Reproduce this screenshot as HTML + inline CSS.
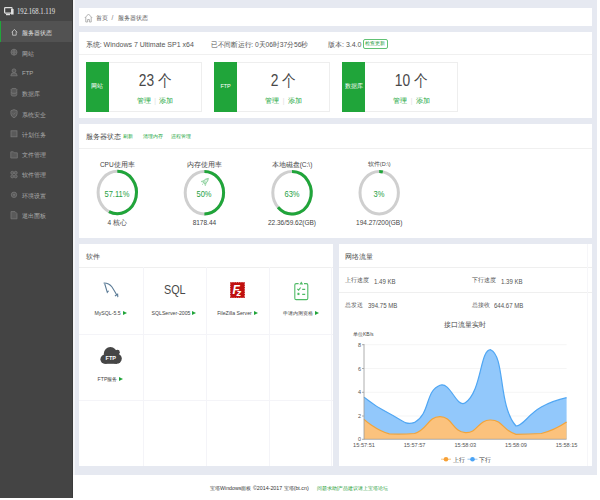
<!DOCTYPE html>
<html><head><meta charset="utf-8">
<style>
*{margin:0;padding:0;box-sizing:border-box}
html,body{width:600px;height:500px;overflow:hidden;background:#fff;font-family:"Liberation Sans",sans-serif;color:#555}
.a{position:absolute;white-space:nowrap;line-height:1}
#side{position:absolute;left:0;top:0;width:73px;height:498px;background:#444}
#main{position:absolute;left:73px;top:0;width:524px;height:475px;background:#e6e9f1}
.card{position:absolute;background:#fff}
.nav{position:absolute;left:22px;font-size:6px;color:#adadad}
.ni{position:absolute;left:10px;width:7px;height:7px}
.g{color:#20a53a}
.stat{position:absolute;top:62px;width:116px;height:50px;border:1px solid #eee;background:#fff}
.stat .lab{position:absolute;left:-1px;top:-1px;width:23.2px;height:50px;background:#20a53a;color:#fff;font-size:5.5px;text-align:center;line-height:49px}
.stat .num{position:absolute;left:23px;right:0;top:10px;text-align:center;font-size:14.5px;color:#484848;line-height:1;transform:scale(0.95,1.12);transform-origin:50% 0}
.stat .ops{position:absolute;left:23px;right:0;top:34.5px;text-align:center;font-size:6.5px;color:#20a53a;line-height:1}
.ct{position:absolute;font-size:6.5px;color:#444;text-align:center;width:80px}
.pct{position:absolute;font-size:9.2px;color:#27a043;text-align:center;width:60px;transform:scaleX(0.82);transform-origin:50% 0}
.lbl{position:absolute;font-size:5.2px;color:#444;text-align:center;width:63px}
.tri{display:inline-block;width:0;height:0;border-left:4px solid #20a53a;border-top:2.5px solid transparent;border-bottom:2.5px solid transparent;margin-left:2px;vertical-align:-0.5px}
.hl{position:absolute;height:1px;background:#f2f2f2}
.vl{position:absolute;width:1px;background:#f4f4f8}
</style></head><body>
<div id="side">
  <div style="position:absolute;left:0;top:0;width:73px;height:21px;background:#454545"></div>
  <svg class="a" style="left:4px;top:7px" width="10" height="9" viewBox="0 0 10 9"><rect x="0.6" y="0.6" width="7.5" height="5.5" rx="0.8" fill="none" stroke="#e0e0e0" stroke-width="1.2"/><rect x="7" y="2" width="2.6" height="5.5" fill="#e0e0e0"/><rect x="2" y="7" width="4" height="1.2" fill="#e0e0e0"/></svg>
  <div class="a" style="left:16.5px;top:7.5px;font-size:7.5px;color:#e4e4e4;font-family:'Liberation Serif',serif;transform:scaleX(0.89);transform-origin:0 0">192.168.1.119</div>
  <div style="position:absolute;left:0;top:20.5px;width:73px;height:21px;background:#525252"></div>
  <div style="position:absolute;left:0;top:20.5px;width:1.2px;height:21px;background:#20a53a"></div>
  <svg class="a" style="left:11px;top:28px" width="8" height="8" viewBox="0 0 8 8"><path d="M0.7,4.3 L3.4,1.4 L6.1,4.3 M1.6,3.5 V7.2 H5.2 V3.5" fill="none" stroke="#d0d0d0" stroke-width="0.8"/></svg>
  <div class="nav" style="left:22px;top:29px;color:#e6e6e6">服务器状态</div>
  <div class="nav" style="top:49.5px">网站</div>
  <div class="nav" style="top:69.5px">FTP</div>
  <div class="nav" style="top:90px">数据库</div>
  <div class="nav" style="top:110.5px">系统安全</div>
  <div class="nav" style="top:130.5px">计划任务</div>
  <div class="nav" style="top:151px">文件管理</div>
  <div class="nav" style="top:170.5px">软件管理</div>
  <div class="nav" style="top:191.5px">环境设置</div>
  <div class="nav" style="top:211.5px">退出面板</div>
  <svg class="a" style="left:0;top:0" width="73" height="230">
    <g fill="#5a5a5a" stroke="#777" stroke-width="0.8">
      <circle cx="14" cy="52.2" r="3"/><path d="M11,52.2 h6 M14,49.2 q-1.8,3 0,6 q1.8,-3 0,-6" fill="none" stroke-width="0.6"/>
      <circle cx="14" cy="70.8" r="1.9"/><path d="M10.8,75.8 q0,-3 3.2,-3 q3.2,0 3.2,3 z"/>
      <ellipse cx="14" cy="89.5" rx="2.8" ry="1.1"/><path d="M11.2,89.5 v5.5 q0,1.1 2.8,1.1 q2.8,0 2.8,-1.1 v-5.5 M11.2,92.3 q0,1.1 2.8,1.1 q2.8,0 2.8,-1.1"/>
      <path d="M14,109.6 l3.1,1.2 v3 q0,2.7 -3.1,4 q-3.1,-1.3 -3.1,-4 v-3 z"/><path d="M12.6,113.4 l1,1 l1.8,-1.9" fill="none" stroke-width="0.6"/>
      <rect x="11" y="130.8" width="6" height="6"/>
      <path d="M10.8,151.8 h2.6 l0.9,1 h3 v5.2 h-6.5 z"/>
      <circle cx="12.3" cy="172.8" r="1.5"/><circle cx="15.7" cy="172.8" r="1.5"/><circle cx="12.3" cy="176.4" r="1.5"/><circle cx="15.7" cy="176.4" r="1.5"/>
      <circle cx="14" cy="194.8" r="2.7"/><circle cx="14" cy="194.8" r="0.9" fill="#777" stroke="none"/>
      <path d="M11,211.6 h4 l2,2 v5.2 h-6 z"/>
    </g>
  </svg>
  <div style="position:absolute;right:0;top:0;width:1px;height:498px;background:#3a3a3a"></div>
</div>
<div id="main"></div>
<div style="position:absolute;left:73px;top:0;width:1.5px;height:475px;background:#f3f4f7"></div>

<!-- breadcrumb -->
<div class="card" style="left:79px;top:8px;width:513px;height:18px"></div>
<svg class="a" style="left:84px;top:12.5px" width="9" height="10" viewBox="0 0 9 10"><path d="M0.8,5 L4.5,1 L8.2,5 M1.8,4.2 V9 H3.6 V6.5 H5.4 V9 H7.2 V4.2" fill="none" stroke="#aaa" stroke-width="0.9"/></svg>
<div class="a" style="left:95.5px;top:15.8px;font-size:5.8px;color:#505050">首页</div>
<div class="a" style="left:111.5px;top:14.6px;font-size:6.5px;color:#777">/</div>
<div class="a" style="left:117.5px;top:15.8px;font-size:5.8px;color:#505050">服务器状态</div>

<!-- system card -->
<div class="card" style="left:79px;top:32px;width:513px;height:86px"></div>
<div class="hl" style="left:79px;top:54px;width:513px;background:#f0f0f0"></div>
<div class="a" style="left:85.7px;top:40.5px;font-size:7px;color:#555">系统: Windows 7 Ultimate SP1 x64</div>
<div class="a" style="left:211px;top:40.5px;font-size:7px;color:#555;transform:scaleX(0.96);transform-origin:0 0">已不间断运行: 0天06时37分56秒</div>
<div class="a" style="left:328px;top:40.5px;font-size:7px;color:#555">版本: 3.4.0</div>
<div class="a" style="left:362.5px;top:39px;width:25px;height:9.6px;border:1px solid #62c275;border-radius:2px;font-size:4.6px;color:#2a9e45;text-align:center;line-height:7.6px">检查更新</div>

<div class="stat" style="left:85.5px"><div class="lab">网站</div><div class="num">23 个</div><div class="ops">管理 &nbsp;<span style="color:#ddd">|</span>&nbsp; 添加</div></div>
<div class="stat" style="left:214px"><div class="lab">FTP</div><div class="num">2 个</div><div class="ops">管理 &nbsp;<span style="color:#ddd">|</span>&nbsp; 添加</div></div>
<div class="stat" style="left:342px"><div class="lab">数据库</div><div class="num">10 个</div><div class="ops">管理 &nbsp;<span style="color:#ddd">|</span>&nbsp; 添加</div></div>

<!-- server status -->
<div class="card" style="left:79px;top:124px;width:513px;height:114px"></div>
<div class="hl" style="left:79px;top:148px;width:513px;background:#f0f0f0"></div>
<div class="a" style="left:85.7px;top:134px;font-size:6.5px;color:#4a4a4a">服务器状态</div>
<div class="a g" style="left:123px;top:135px;font-size:4.7px">刷新</div>
<div class="a g" style="left:142.5px;top:135px;font-size:4.5px">清理内存</div>
<div class="a g" style="left:171px;top:135px;font-size:4.6px">进程管理</div>

<svg class="a" style="left:0;top:0" width="600" height="240">
  <g fill="none" stroke-width="3">
    <ellipse cx="117.3" cy="192.5" rx="19.2" ry="21.2" stroke="#cfcfcf"/>
    <ellipse cx="204.4" cy="192.8" rx="19.2" ry="21.2" stroke="#cfcfcf"/>
    <ellipse cx="292" cy="192.8" rx="19.2" ry="21.2" stroke="#cfcfcf"/>
    <ellipse cx="379.2" cy="192.8" rx="19.2" ry="21.2" stroke="#cfcfcf"/>
  </g>
  <path d="M117.30,171.30 A19.20,21.20 0 1 1 109.01,211.62" fill="none" stroke="#20a53a" stroke-width="3"/><path d="M204.40,171.60 A19.20,21.20 0 0 1 204.40,214.00" fill="none" stroke="#20a53a" stroke-width="3"/><path d="M292.00,171.60 A19.20,21.20 0 1 1 278.00,207.31" fill="none" stroke="#20a53a" stroke-width="3"/><path d="M379.20,171.60 A19.20,21.20 0 0 1 382.80,171.98" fill="none" stroke="#20a53a" stroke-width="3"/>
</svg>
<div class="ct" style="left:77.3px;top:161px">CPU使用率</div>
<div class="pct" style="left:87.3px;top:188.5px">57.11%</div>
<div class="ct" style="left:77.3px;top:219px">4 核心</div>
<div class="ct" style="left:164.4px;top:161px">内存使用率</div>
<svg class="a" style="left:0;top:0" width="215" height="190"><g transform="translate(205.2,181.6) rotate(45)"><path d="M0,-4.6 Q2,-2.6 1.8,1.8 L-1.8,1.8 Q-2,-2.6 0,-4.6 Z" fill="#bfe5c8" stroke="#7cc98f" stroke-width="0.7"/><path d="M-1.8,0.6 L-3,2.8 L-1.6,2.4 M1.8,0.6 L3,2.8 L1.6,2.4" fill="none" stroke="#7cc98f" stroke-width="0.6"/><path d="M0,2.4 V4.4" stroke="#7cc98f" stroke-width="0.7"/><circle cx="0" cy="-1.2" r="0.7" fill="#fff"/></g></svg>
<div class="pct" style="left:174.4px;top:188.5px">50%</div>
<div class="ct" style="left:164.4px;top:219px">8178.44</div>
<div class="ct" style="left:252px;top:161px">本地磁盘(C:\)</div>
<div class="pct" style="left:262px;top:188.5px">63%</div>
<div class="ct" style="left:252px;top:219px">22.36/59.62(GB)</div>
<div class="ct" style="left:339.2px;top:161px;font-size:5.5px">软件(D:\)</div>
<div class="pct" style="left:349.2px;top:188.5px">3%</div>
<div class="ct" style="left:339.2px;top:219px">194.27/200(GB)</div>

<!-- software card -->
<div class="card" style="left:79px;top:244px;width:253.5px;height:222px"></div>
<div class="a" style="left:85.5px;top:253.7px;font-size:6.6px;color:#4a4a4a">软件</div>
<div class="hl" style="left:79px;top:267px;width:253.5px;background:#efefef"></div>
<div class="hl" style="left:79px;top:333.5px;width:253.5px;background:#f4f4f8"></div>
<div class="hl" style="left:79px;top:399.5px;width:253.5px;background:#f4f4f8"></div>
<div class="vl" style="left:142.5px;top:267px;height:199px"></div>
<div class="vl" style="left:206px;top:267px;height:199px"></div>
<div class="vl" style="left:269px;top:267px;height:199px"></div>
<div class="vl" style="left:331px;top:267px;height:199px"></div>

<svg class="a" style="left:0;top:0" width="130" height="305"><g fill="none" stroke="#5b7b96" stroke-width="1.1" stroke-linecap="round"><path d="M104,283 Q109,283 112,287 Q114.5,291 116.5,294.5"/><path d="M104.8,284 Q106,288 107.3,292.3 L108.3,291.2"/><path d="M115.3,295.8 L117.6,294.2 L117.8,296.6"/></g></svg>
<div class="lbl" style="left:79px;top:309.5px">MySQL-5.5<span class="tri"></span></div>
<div class="a" style="left:143px;top:283.5px;width:63.5px;text-align:center;font-size:10.8px;color:#4a4a4a;transform:scaleY(1.1);transform-origin:50% 0">SQL</div>
<div class="lbl" style="left:142.5px;top:309.5px">SQLServer-2005<span class="tri"></span></div>
<svg class="a" style="left:230px;top:281.7px" width="15" height="16" viewBox="0 0 15 16"><rect x="0" y="0" width="15" height="16" fill="#c0100f"/><circle cx="1.20" cy="0.1" r="0.5" fill="#fff"/><circle cx="1.20" cy="15.9" r="0.5" fill="#fff"/><circle cx="3.00" cy="0.1" r="0.5" fill="#fff"/><circle cx="3.00" cy="15.9" r="0.5" fill="#fff"/><circle cx="4.80" cy="0.1" r="0.5" fill="#fff"/><circle cx="4.80" cy="15.9" r="0.5" fill="#fff"/><circle cx="6.60" cy="0.1" r="0.5" fill="#fff"/><circle cx="6.60" cy="15.9" r="0.5" fill="#fff"/><circle cx="8.40" cy="0.1" r="0.5" fill="#fff"/><circle cx="8.40" cy="15.9" r="0.5" fill="#fff"/><circle cx="10.20" cy="0.1" r="0.5" fill="#fff"/><circle cx="10.20" cy="15.9" r="0.5" fill="#fff"/><circle cx="12.00" cy="0.1" r="0.5" fill="#fff"/><circle cx="12.00" cy="15.9" r="0.5" fill="#fff"/><circle cx="13.80" cy="0.1" r="0.5" fill="#fff"/><circle cx="13.80" cy="15.9" r="0.5" fill="#fff"/><circle cx="0.1" cy="1.10" r="0.5" fill="#fff"/><circle cx="14.9" cy="1.10" r="0.5" fill="#fff"/><circle cx="0.1" cy="2.82" r="0.5" fill="#fff"/><circle cx="14.9" cy="2.82" r="0.5" fill="#fff"/><circle cx="0.1" cy="4.54" r="0.5" fill="#fff"/><circle cx="14.9" cy="4.54" r="0.5" fill="#fff"/><circle cx="0.1" cy="6.26" r="0.5" fill="#fff"/><circle cx="14.9" cy="6.26" r="0.5" fill="#fff"/><circle cx="0.1" cy="7.98" r="0.5" fill="#fff"/><circle cx="14.9" cy="7.98" r="0.5" fill="#fff"/><circle cx="0.1" cy="9.70" r="0.5" fill="#fff"/><circle cx="14.9" cy="9.70" r="0.5" fill="#fff"/><circle cx="0.1" cy="11.42" r="0.5" fill="#fff"/><circle cx="14.9" cy="11.42" r="0.5" fill="#fff"/><circle cx="0.1" cy="13.14" r="0.5" fill="#fff"/><circle cx="14.9" cy="13.14" r="0.5" fill="#fff"/><circle cx="0.1" cy="14.86" r="0.5" fill="#fff"/><circle cx="14.9" cy="14.86" r="0.5" fill="#fff"/><text x="2.6" y="11.6" font-family="Liberation Sans" font-weight="bold" font-style="italic" font-size="12" fill="#fff">F</text><text x="6.6" y="13.7" font-family="Liberation Sans" font-weight="bold" font-style="italic" font-size="9.5" fill="#fff">z</text></svg>
<div class="lbl" style="left:206px;top:309.5px">FileZilla Server<span class="tri"></span></div>
<svg class="a" style="left:0;top:0" width="320" height="305"><g fill="none" stroke="#4fba66" stroke-width="1.1"><path d="M298.6,283.6 H296.2 Q294.8,283.6 294.8,285 V298.2 Q294.8,299.6 296.2,299.6 H306.4 Q307.8,299.6 307.8,298.2 V285 Q307.8,283.6 306.4,283.6 H304"/><path d="M297.4,288.9 L298.6,290.2 L300.6,287.5 M302.2,289.4 H305.2 M297.6,293 L299.3,294.8 M299.3,293 L297.6,294.8 M302.2,294.4 H305.2"/></g><path d="M299.4,284.6 L301.3,281.6 L303.2,284.6 Z" fill="#4fba66"/></svg>
<div class="lbl" style="left:269px;top:309.5px">申请内测资格<span class="tri"></span></div>
<svg class="a" style="left:0;top:0" width="130" height="370"><g fill="#464646"><rect x="104.5" y="355" width="12.5" height="8.8"/><circle cx="105" cy="359.2" r="4.6"/><circle cx="116.6" cy="358.6" r="5.2"/><circle cx="110.4" cy="353.6" r="6.6"/><circle cx="117.4" cy="352.2" r="2.4"/></g><text x="110.8" y="360.2" font-family="Liberation Sans" font-weight="bold" font-size="5.6" fill="#fff" text-anchor="middle">FTP</text></svg>
<div class="lbl" style="left:79px;top:375.5px">FTP服务<span class="tri"></span></div>

<!-- network card -->
<div class="card" style="left:338.5px;top:244px;width:253.5px;height:222px"></div>
<div class="a" style="left:344.5px;top:254px;font-size:6.6px;color:#4a4a4a">网络流量</div>
<div class="hl" style="left:338.5px;top:267px;width:253.5px;background:#efefef"></div>
<div class="hl" style="left:338.5px;top:292px;width:253.5px;background:#efefef"></div>
<div class="vl" style="left:587px;top:244px;height:222px;background:#f6f6f9"></div>
<div class="a" style="left:344.5px;top:278px;font-size:5.5px;color:#555">上行速度</div>
<div class="a" style="left:373.5px;top:278.6px;font-size:6.6px;color:#555;transform:scaleX(0.92);transform-origin:0 0">1.49 KB</div>
<div class="a" style="left:471.5px;top:278px;font-size:5.5px;color:#555">下行速度</div>
<div class="a" style="left:500.5px;top:278.6px;font-size:6.6px;color:#555;transform:scaleX(0.92);transform-origin:0 0">1.39 KB</div>
<div class="a" style="left:344.5px;top:303px;font-size:5.5px;color:#555">总发送</div>
<div class="a" style="left:367.8px;top:303.4px;font-size:6.6px;color:#555;transform:scaleX(0.92);transform-origin:0 0">394.75 MB</div>
<div class="a" style="left:471.5px;top:303px;font-size:5.5px;color:#555">总接收</div>
<div class="a" style="left:493.5px;top:303.4px;font-size:6.6px;color:#555;transform:scaleX(0.92);transform-origin:0 0">644.67 MB</div>
<div class="a" style="left:444px;top:320.5px;font-size:7px;color:#444">接口流量实时</div>
<div class="a" style="left:353px;top:332px;font-size:5px;color:#444">单位KB/s</div>
<svg class="a" style="left:0;top:0" width="600" height="470">
  <g stroke="#f2f2f2" stroke-width="0.8">
    <line x1="364" y1="344.7" x2="566.6" y2="344.7"/>
    <line x1="364" y1="368.5" x2="566.6" y2="368.5"/>
    <line x1="364" y1="392.3" x2="566.6" y2="392.3"/>
    <line x1="364" y1="416" x2="566.6" y2="416"/>
  </g>
  <path d="M364.0,397.1 C364.0,397.1 375.9,406.8 389.3,413.5 C401.2,419.5 405.2,426.0 414.6,422.4 C430.5,413.5 424.9,391.0 440.0,385.2 C450.3,381.2 456.6,408.8 465.3,402.7 C481.9,391.0 479.9,349.7 490.6,349.7 C505.3,356.4 497.8,405.4 516.0,426.0 C523.1,426.0 527.6,414.8 541.3,407.1 C553.0,400.6 566.6,397.7 566.6,397.7 L566.6,439.0 L364.0,439.0 Z" fill="#92c8fb"/>
  <path d="M364.0,397.1 C364.0,397.1 375.9,406.8 389.3,413.5 C401.2,419.5 405.2,426.0 414.6,422.4 C430.5,413.5 424.9,391.0 440.0,385.2 C450.3,381.2 456.6,408.8 465.3,402.7 C481.9,391.0 479.9,349.7 490.6,349.7 C505.3,356.4 497.8,405.4 516.0,426.0 C523.1,426.0 527.6,414.8 541.3,407.1 C553.0,400.6 566.6,397.7 566.6,397.7" fill="none" stroke="#4fa6f3" stroke-width="1.2"/>
  <path d="M364.0,419.4 C364.0,419.4 375.8,430.2 389.3,433.9 C401.1,434.3 403.1,434.3 414.6,433.5 C428.5,428.8 427.2,416.9 440.0,416.7 C452.5,416.7 452.3,431.8 465.3,432.6 C477.6,433.4 478.1,419.6 490.6,420.0 C503.5,420.4 502.4,430.7 516.0,434.3 C527.7,434.3 529.2,434.3 541.3,433.5 C554.5,430.2 566.6,422.0 566.6,422.0 L566.6,439.0 L364.0,439.0 Z" fill="#fbc27d"/>
  <path d="M364.0,419.4 C364.0,419.4 375.8,430.2 389.3,433.9 C401.1,434.3 403.1,434.3 414.6,433.5 C428.5,428.8 427.2,416.9 440.0,416.7 C452.5,416.7 452.3,431.8 465.3,432.6 C477.6,433.4 478.1,419.6 490.6,420.0 C503.5,420.4 502.4,430.7 516.0,434.3 C527.7,434.3 529.2,434.3 541.3,433.5 C554.5,430.2 566.6,422.0 566.6,422.0" fill="none" stroke="#f2a43a" stroke-width="1.2"/>
  <line x1="364" y1="344" x2="364" y2="439.5" stroke="#999" stroke-width="0.8"/>
  <line x1="364" y1="439.3" x2="566.6" y2="439.3" stroke="#999" stroke-width="0.8"/>
  <g stroke="#999" stroke-width="0.8">
    <line x1="362" y1="344.7" x2="364" y2="344.7"/><line x1="362" y1="368.5" x2="364" y2="368.5"/>
    <line x1="362" y1="392.3" x2="364" y2="392.3"/><line x1="362" y1="416" x2="364" y2="416"/><line x1="362" y1="439.3" x2="364" y2="439.3"/>
  </g>
  <g font-family="Liberation Sans" font-size="5.5" fill="#555" text-anchor="end">
    <text x="361" y="346.7">8</text><text x="361" y="370.5">6</text><text x="361" y="394.3">4</text><text x="361" y="418">2</text><text x="361" y="441.3">0</text>
  </g>
  <g font-family="Liberation Sans" font-size="5.6" fill="#555" text-anchor="middle">
    <text x="364" y="447.2">15:57:51</text><text x="414.6" y="447.2">15:57:57</text><text x="465.3" y="447.2">15:58:03</text><text x="516" y="447.2">15:58:09</text><text x="566.6" y="447.2">15:58:15</text>
  </g>
  <line x1="441" y1="459.2" x2="451" y2="459.2" stroke="#f7b55e" stroke-width="0.8"/>
  <circle cx="446" cy="459.2" r="2.3" fill="#f7a035"/>
  <line x1="467.5" y1="459.2" x2="477.5" y2="459.2" stroke="#7ab8f0" stroke-width="0.8"/>
  <circle cx="472.5" cy="459.2" r="2.3" fill="#4aa3f5"/>
  <g font-family="Liberation Sans" font-size="5.5" fill="#444"><text x="453.3" y="462.3">上行</text><text x="479" y="462.3">下行</text></g>
</svg>

<!-- footer -->
<div class="a" style="left:210px;top:485.5px;font-size:5.3px;color:#333">宝塔Windows面板 ©2014-2017 宝塔(bt.cn)</div>
<div class="a g" style="left:317px;top:485.5px;font-size:5.3px;color:#1f9d38">问题求助|产品建议请上宝塔论坛</div>
</body></html>
